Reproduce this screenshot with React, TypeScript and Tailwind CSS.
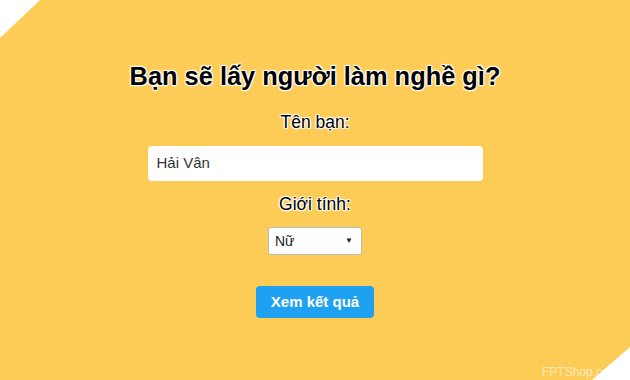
const glow = "[text-shadow:0_0_1px_#fff,0_0_2px_#fff,1px_1px_1px_#fff,-1px_-1px_1px_#fff,1px_-1px_1px_#fff,-1px_1px_1px_#fff]"

const App = () => {
  return (
    <div className="w-[630px] h-[380px] bg-white overflow-hidden">
      <div
        className="relative w-full h-full bg-[#fdcc56] [clip-path:polygon(40px_0,100%_0,100%_347px,592px_100%,0_100%,0_38px)] font-['Liberation_Sans',Arial,sans-serif] flex flex-col items-center"
      >
        <h1 className={`mt-[58px] text-[25.4px] leading-[36px] font-bold text-black ${glow}`}>
          Bạn sẽ lấy người làm nghề gì?
        </h1>
        <label className={`mt-[17px] text-[17.5px] leading-[22px] text-black ${glow}`}>
          Tên bạn:
        </label>
        <div className="mt-[13px] w-[335px] h-[35px] bg-white rounded-[4px] flex items-center px-[9px] text-[15px] text-[#333]">
          Hải Vân
        </div>
        <label className={`mt-[12px] text-[17.5px] leading-[22px] text-black ${glow}`}>
          Giới tính:
        </label>
        <div className="mt-[12px] w-[94px] h-[28px] bg-white rounded-[3px] border border-[#bbb] flex items-center justify-between pl-[6px] pr-[8px] text-[14px] text-[#222]">
          <span>Nữ</span>
          <span className="text-[8px]">▼</span>
        </div>
        <button className="mt-[31px] w-[118px] h-[32px] bg-[#1fa1f1] rounded-[4px] text-white font-bold text-[15px]">
          Xem kết quả
        </button>
        <span className="absolute left-[542px] top-[365px] text-[12px] leading-[14px] text-white/60">
          FPTShop.c
        </span>
      </div>
    </div>
  )
}

export default App
